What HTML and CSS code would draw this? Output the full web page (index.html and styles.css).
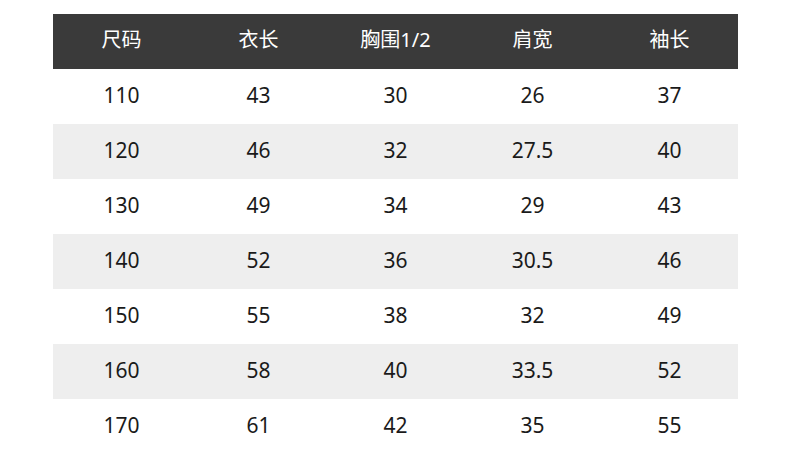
FILE: index.html
```html
<!DOCTYPE html>
<html lang="zh">
<head>
<meta charset="utf-8">
<link rel="stylesheet" href="styles.css">
</head>
<body>
<div class="table">
  <div class="row head"><div>尺码</div><div>衣长</div><div>胸围1/2</div><div>肩宽</div><div>袖长</div></div>
  <div class="row"><div>110</div><div>43</div><div>30</div><div>26</div><div>37</div></div>
  <div class="row alt"><div>120</div><div>46</div><div>32</div><div>27.5</div><div>40</div></div>
  <div class="row"><div>130</div><div>49</div><div>34</div><div>29</div><div>43</div></div>
  <div class="row alt"><div>140</div><div>52</div><div>36</div><div>30.5</div><div>46</div></div>
  <div class="row"><div>150</div><div>55</div><div>38</div><div>32</div><div>49</div></div>
  <div class="row alt"><div>160</div><div>58</div><div>40</div><div>33.5</div><div>52</div></div>
  <div class="row"><div>170</div><div>61</div><div>42</div><div>35</div><div>55</div></div>
</div>
</body>
</html>
```
FILE: styles.css
```css
html, body { margin: 0; padding: 0; background: #ffffff; }
body { padding: 14px 0 0 53px; font-family: "Noto Sans", "Noto Sans CJK SC", sans-serif; }
.table { width: 685px; }
.row { display: grid; grid-template-columns: repeat(5, 1fr); height: 55px; box-sizing: border-box; padding-bottom: 4px; align-items: center; text-align: center; font-size: 21px; line-height: 24px; color: #1a1a1a; }
.row.head { background: #3a3a3a; color: #ffffff; font-size: 20px; }
.row.alt { background: #eeeeee; }
```
